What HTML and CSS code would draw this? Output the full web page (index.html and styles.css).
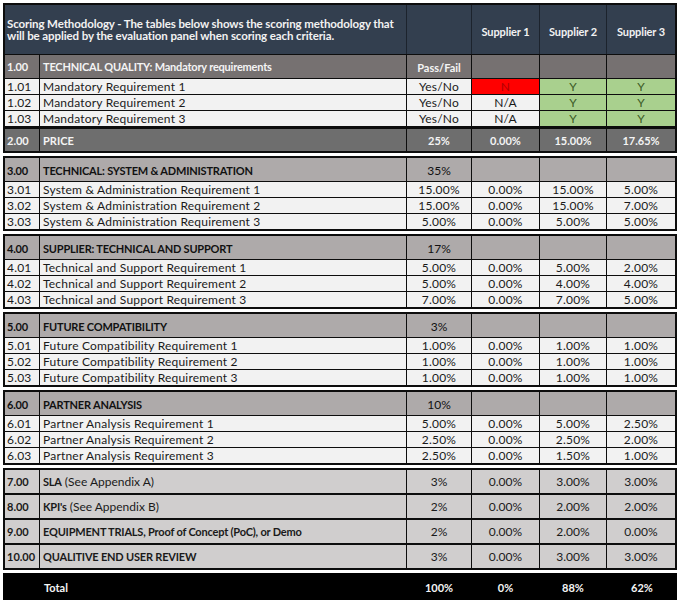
FILE: index.html
```html
<!DOCTYPE html>
<html>
<head>
<meta charset="utf-8">
<link rel="stylesheet" href="styles.css">
</head>
<body>
<div class="sheet">
  <section class="box">
    <div class="row head">
      <div class="c title">Scoring Methodology - The tables below shows the scoring methodology that will be applied by the evaluation panel when scoring each criteria.</div>
      <div class="c"></div>
      <div class="c mid">Supplier 1</div>
      <div class="c mid">Supplier 2</div>
      <div class="c mid">Supplier 3</div>
    </div>
    <div class="row sec-dark">
      <div class="c num">1.00</div>
      <div class="c txt">TECHNICAL QUALITY: Mandatory requirements</div>
      <div class="c mid">Pass/Fail</div>
      <div class="c"></div>
      <div class="c"></div>
      <div class="c"></div>
    </div>
    <div class="row item">
      <div class="c num">1.01</div>
      <div class="c txt">Mandatory Requirement 1</div>
      <div class="c mid">Yes/No</div>
      <div class="c mid no">N</div>
      <div class="c mid yes">Y</div>
      <div class="c mid yes">Y</div>
    </div>
    <div class="row item">
      <div class="c num">1.02</div>
      <div class="c txt">Mandatory Requirement 2</div>
      <div class="c mid">Yes/No</div>
      <div class="c mid">N/A</div>
      <div class="c mid yes">Y</div>
      <div class="c mid yes">Y</div>
    </div>
    <div class="row item">
      <div class="c num">1.03</div>
      <div class="c txt">Mandatory Requirement 3</div>
      <div class="c mid">Yes/No</div>
      <div class="c mid">N/A</div>
      <div class="c mid yes">Y</div>
      <div class="c mid yes">Y</div>
    </div>
    <div class="row price">
      <div class="c num">2.00</div>
      <div class="c txt">PRICE</div>
      <div class="c mid">25%</div>
      <div class="c mid">0.00%</div>
      <div class="c mid">15.00%</div>
      <div class="c mid">17.65%</div>
    </div>
  </section>

  <section class="box">
    <div class="row sec">
      <div class="c num">3.00</div>
      <div class="c txt">TECHNICAL: SYSTEM &amp; ADMINISTRATION</div>
      <div class="c mid w">35%</div>
      <div class="c"></div><div class="c"></div><div class="c"></div>
    </div>
    <div class="row item"><div class="c num">3.01</div><div class="c txt">System &amp; Administration Requirement 1</div><div class="c mid">15.00%</div><div class="c mid">0.00%</div><div class="c mid">15.00%</div><div class="c mid">5.00%</div></div>
    <div class="row item"><div class="c num">3.02</div><div class="c txt">System &amp; Administration Requirement 2</div><div class="c mid">15.00%</div><div class="c mid">0.00%</div><div class="c mid">15.00%</div><div class="c mid">7.00%</div></div>
    <div class="row item"><div class="c num">3.03</div><div class="c txt">System &amp; Administration Requirement 3</div><div class="c mid">5.00%</div><div class="c mid">0.00%</div><div class="c mid">5.00%</div><div class="c mid">5.00%</div></div>
  </section>

  <section class="box">
    <div class="row sec">
      <div class="c num">4.00</div>
      <div class="c txt">SUPPLIER: TECHNICAL AND SUPPORT</div>
      <div class="c mid w">17%</div>
      <div class="c"></div><div class="c"></div><div class="c"></div>
    </div>
    <div class="row item"><div class="c num">4.01</div><div class="c txt">Technical and Support Requirement 1</div><div class="c mid">5.00%</div><div class="c mid">0.00%</div><div class="c mid">5.00%</div><div class="c mid">2.00%</div></div>
    <div class="row item"><div class="c num">4.02</div><div class="c txt">Technical and Support Requirement 2</div><div class="c mid">5.00%</div><div class="c mid">0.00%</div><div class="c mid">4.00%</div><div class="c mid">4.00%</div></div>
    <div class="row item"><div class="c num">4.03</div><div class="c txt">Technical and Support Requirement 3</div><div class="c mid">7.00%</div><div class="c mid">0.00%</div><div class="c mid">7.00%</div><div class="c mid">5.00%</div></div>
  </section>

  <section class="box">
    <div class="row sec">
      <div class="c num">5.00</div>
      <div class="c txt">FUTURE COMPATIBILITY</div>
      <div class="c mid w">3%</div>
      <div class="c"></div><div class="c"></div><div class="c"></div>
    </div>
    <div class="row item"><div class="c num">5.01</div><div class="c txt">Future Compatibility Requirement 1</div><div class="c mid">1.00%</div><div class="c mid">0.00%</div><div class="c mid">1.00%</div><div class="c mid">1.00%</div></div>
    <div class="row item"><div class="c num">5.02</div><div class="c txt">Future Compatibility Requirement 2</div><div class="c mid">1.00%</div><div class="c mid">0.00%</div><div class="c mid">1.00%</div><div class="c mid">1.00%</div></div>
    <div class="row item"><div class="c num">5.03</div><div class="c txt">Future Compatibility Requirement 3</div><div class="c mid">1.00%</div><div class="c mid">0.00%</div><div class="c mid">1.00%</div><div class="c mid">1.00%</div></div>
  </section>

  <section class="box">
    <div class="row sec">
      <div class="c num">6.00</div>
      <div class="c txt">PARTNER ANALYSIS</div>
      <div class="c mid w">10%</div>
      <div class="c"></div><div class="c"></div><div class="c"></div>
    </div>
    <div class="row item"><div class="c num">6.01</div><div class="c txt">Partner Analysis Requirement 1</div><div class="c mid">5.00%</div><div class="c mid">0.00%</div><div class="c mid">5.00%</div><div class="c mid">2.50%</div></div>
    <div class="row item"><div class="c num">6.02</div><div class="c txt">Partner Analysis Requirement 2</div><div class="c mid">2.50%</div><div class="c mid">0.00%</div><div class="c mid">2.50%</div><div class="c mid">2.00%</div></div>
    <div class="row item"><div class="c num">6.03</div><div class="c txt">Partner Analysis Requirement 3</div><div class="c mid">2.50%</div><div class="c mid">0.00%</div><div class="c mid">1.50%</div><div class="c mid">1.00%</div></div>
  </section>

  <section class="box">
    <div class="row extra"><div class="c num">7.00</div><div class="c txt"><span><b>SLA</b> (See Appendix A)</span></div><div class="c mid">3%</div><div class="c mid">0.00%</div><div class="c mid">3.00%</div><div class="c mid">3.00%</div></div>
    <div class="row extra"><div class="c num">8.00</div><div class="c txt"><span><b>KPI's</b> (See Appendix B)</span></div><div class="c mid">2%</div><div class="c mid">0.00%</div><div class="c mid">2.00%</div><div class="c mid">2.00%</div></div>
    <div class="row extra"><div class="c num">9.00</div><div class="c txt"><span><b>EQUIPMENT TRIALS, Proof of Concept (PoC), or Demo</b></span></div><div class="c mid">2%</div><div class="c mid">0.00%</div><div class="c mid">2.00%</div><div class="c mid">0.00%</div></div>
    <div class="row extra"><div class="c num">10.00</div><div class="c txt"><span><b>QUALITIVE END USER REVIEW</b></span></div><div class="c mid">3%</div><div class="c mid">0.00%</div><div class="c mid">3.00%</div><div class="c mid">3.00%</div></div>
  </section>

  <div class="row total">
    <div class="c num"></div>
    <div class="c txt">Total</div>
    <div class="c mid">100%</div>
    <div class="c mid">0%</div>
    <div class="c mid">88%</div>
    <div class="c mid">62%</div>
  </div>
</div>
</body>
</html>
```

FILE: styles.css
```css
html, body {
  margin: 0;
  padding: 0;
  background: #ffffff;
}

.sheet {
  width: 674px;
  padding: 3px 0 0 3px;
  display: flex;
  flex-direction: column;
  gap: 3px;
  font-family: Lato, "Open Sans", sans-serif;
  font-size: 12px;
  color: #1a1a1a;
}

.box {
  border: 2px solid #0d0d0d;
  display: flex;
  flex-direction: column;
}

.row {
  display: grid;
  grid-template-columns: 34px 367px 65px 68px 67px 69px;
}

.row + .row {
  border-top: 1px solid #0d0d0d;
}

.c {
  display: flex;
  align-items: center;
  white-space: nowrap;
  overflow: hidden;
  min-width: 0;
}

.c + .c {
  border-left: 1px solid #0d0d0d;
}

.num {
  padding-left: 2px;
}

.txt {
  padding-left: 3px;
}

.mid {
  justify-content: center;
}

.extra b {
  font-weight: 700;
  font-size: 11px;
  letter-spacing: -0.2px;
}

/* header */
.head {
  height: 49px;
  background: #333f4f;
  color: #f2f2f2;
  font-weight: 700;
  font-size: 11px;
  letter-spacing: -0.1px;
  grid-template-columns: 401px 65px 68px 67px 69px;
}

.head .c + .c {
  border-left-color: #1c232d;
}

.head .title {
  white-space: normal;
  font-size: 11.5px;
  padding: 1px 12px 0 2px;
  line-height: 12px;
}

.head .mid {
  padding-top: 4px;
}

/* section header dark (1.00) */
.sec-dark {
  height: 23px;
  background: #767171;
  color: #f4f4f4;
  font-weight: 700;
  font-size: 11px;
  letter-spacing: -0.2px;
  border-top-color: #1c1c1c;
}

.sec-dark .mid {
  letter-spacing: 0;
  padding-top: 2px;
}

/* item rows */
.item {
  height: 15px;
  background: #f2f2f2;
  color: #1a1a1a;
  letter-spacing: 0.2px;
}

.yes {
  background: #a9d08e;
  color: #3b5a25;
}

.no {
  background: #ff0000;
  color: #b00000;
}

/* price row */
.row.price {
  height: 22px;
  border-top: 3px solid #0d0d0d;
  background: #6e6e6e;
  color: #f4f4f4;
  font-weight: 700;
  font-size: 11px;
}

/* section header light */
.sec {
  height: 23px;
  background: #aeaaaa;
  color: #111;
  font-weight: 700;
  font-size: 11px;
  letter-spacing: -0.2px;
}

.sec .c {
  padding-top: 2px;
}

.sec .w {
  font-weight: 400;
  font-size: 12px;
  letter-spacing: 0;
}

/* 7-10 rows */
.row.extra {
  height: 23px;
  background: #d0cece;
  color: #1a1a1a;
}

.row.extra + .row.extra {
  border-top: 2px solid #0d0d0d;
}

.extra .num {
  font-weight: 700;
  font-size: 11px;
}

/* total */
.row.total {
  height: 27px;
  background: #000;
  color: #f4f4f4;
  font-weight: 700;
  font-size: 11px;
  grid-template-columns: 36px 367px 65px 68px 67px 71px;
}

.total .c + .c {
  border-left: 1px solid #000;
}

.total .c {
  padding-top: 2px;
}

.total .txt {
  padding-left: 4px;
}
```
